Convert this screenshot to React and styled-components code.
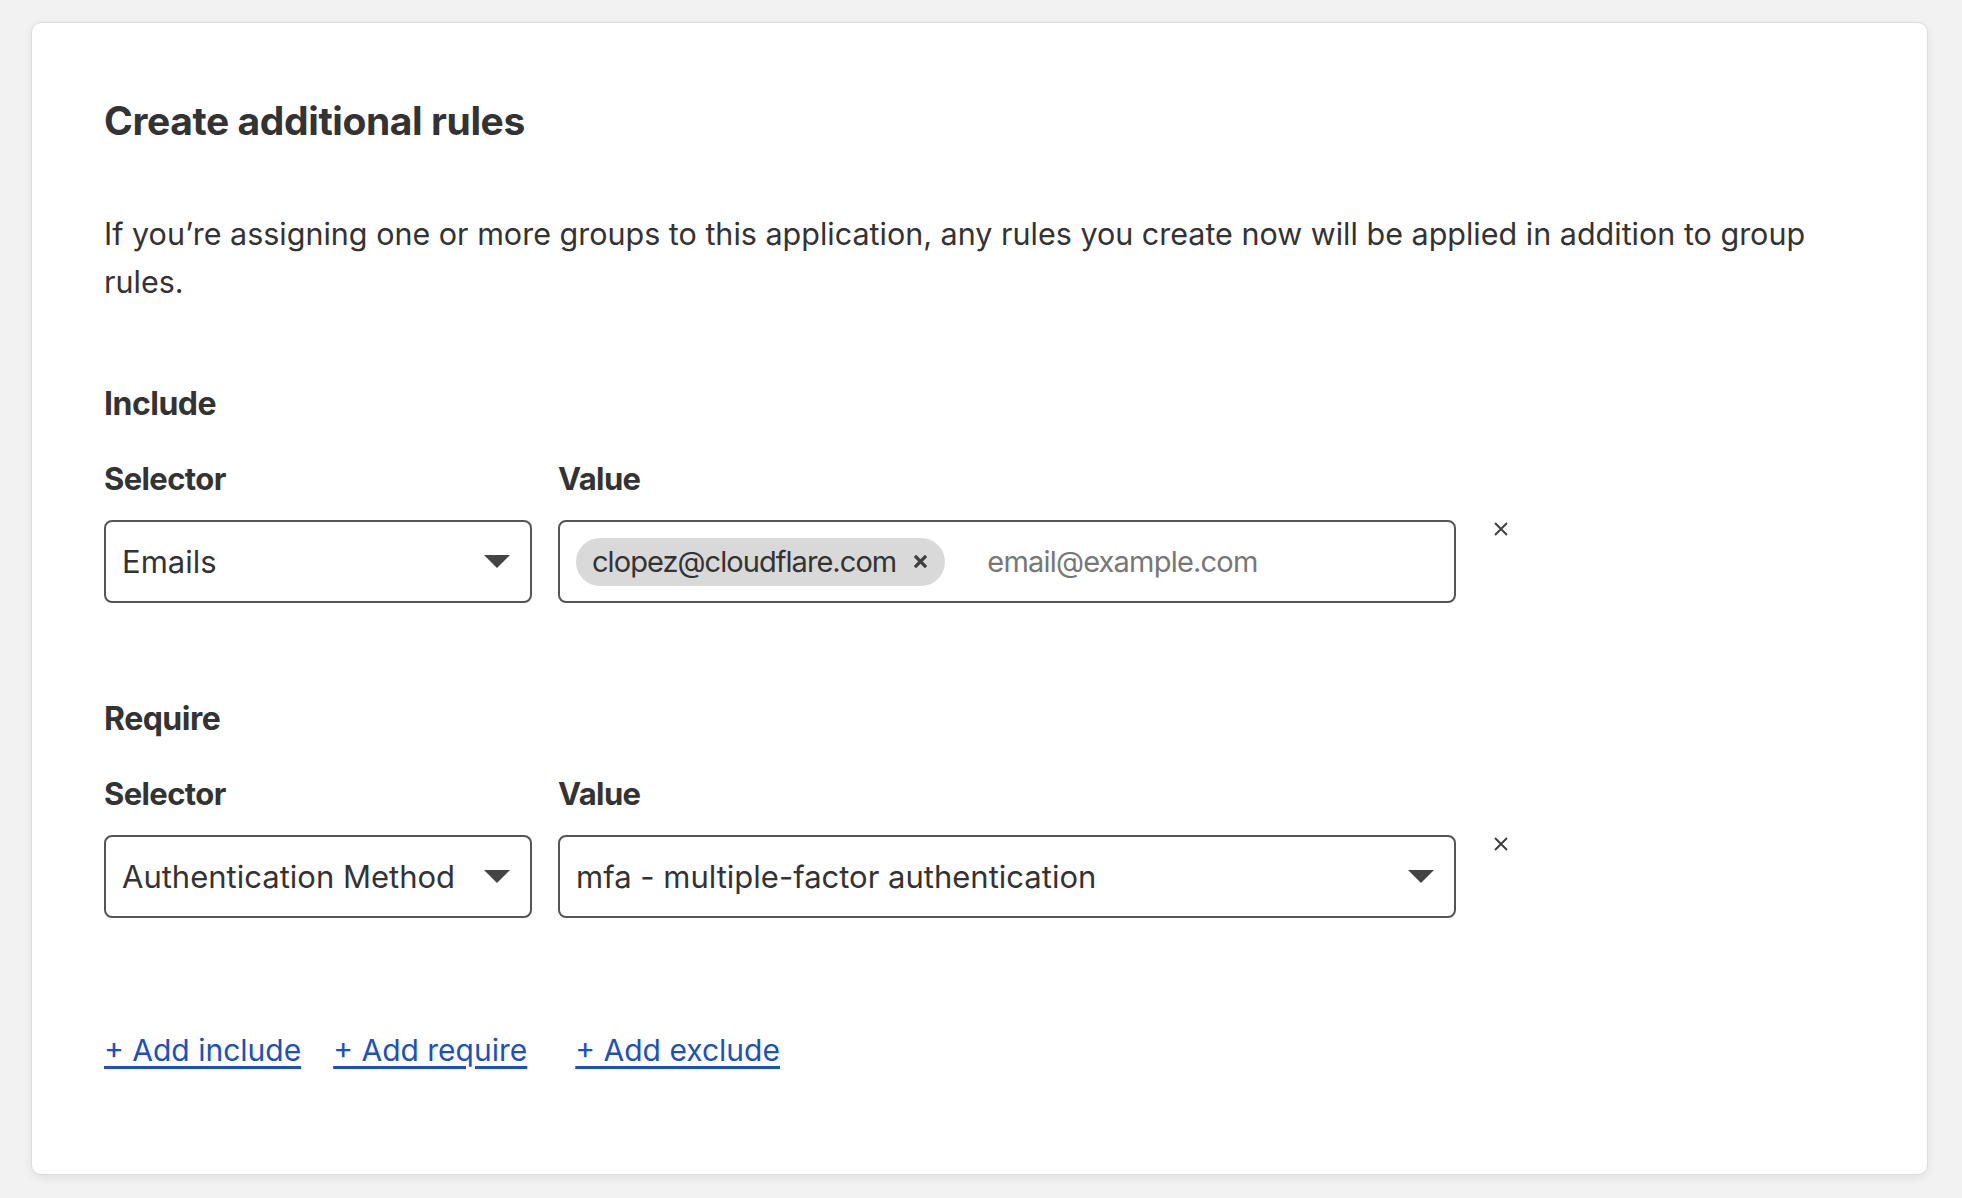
import React from "react";
import styled, { createGlobalStyle } from "styled-components";

const GlobalStyle = createGlobalStyle`
  html, body {
    margin: 0;
    padding: 0;
    background: #f2f2f2;
  }
  body {
    font-family: Inter, "Noto Sans", "Liberation Sans", sans-serif;
    color: #313131;
    -webkit-font-smoothing: antialiased;
  }
  * { box-sizing: border-box; }
`;

const Page = styled.div`
  padding: 22px 34px 27px 31px;
`;

const Card = styled.section`
  width: 1897px;
  background: #ffffff;
  border: 1px solid #dcdcdc;
  border-radius: 10px;
  box-shadow: 0 3px 10px rgba(0, 0, 0, 0.07);
  padding: 76px 72px 104px 72px;
  display: flex;
  flex-direction: column;
`;

const Title = styled.h2`
  margin: 0;
  font-size: 39px;
  line-height: 43px;
  font-weight: 700;
  color: #333333;
  letter-spacing: -0.4px;
`;

const Description = styled.p`
  margin: 68px 0 0 0;
  font-size: 30.5px;
  line-height: 48px;
  font-weight: 400;
  color: #333333;
  max-width: 1730px;
`;

const Section = styled.div`
  margin-top: ${(p) => p.$top}px;
  display: flex;
  flex-direction: column;
`;

const SectionTitle = styled.h3`
  margin: 0;
  font-size: 32px;
  line-height: 40px;
  font-weight: 700;
  color: #333333;
  letter-spacing: -0.5px;
`;

const FieldRow = styled.div`
  margin-top: 35px;
  display: flex;
  align-items: flex-start;
`;

const Field = styled.div`
  display: flex;
  flex-direction: column;
  width: ${(p) => p.$width}px;
  margin-right: ${(p) => p.$gap}px;
`;

const FieldLabel = styled.label`
  font-size: 31px;
  line-height: 40px;
  font-weight: 700;
  color: #333333;
  letter-spacing: -0.6px;
  margin-bottom: 21px;
`;

const Box = styled.div`
  height: 83px;
  border: 2px solid #555555;
  border-radius: 8px;
  background: #ffffff;
  display: flex;
  align-items: center;
  padding: 0 ${(p) => p.$padRight || 16}px 0 ${(p) => p.$padLeft || 16}px;
  gap: 16px;
`;

const BoxText = styled.span`
  flex: 1;
  font-size: 31px;
  color: #333333;
  white-space: nowrap;
  overflow: hidden;
`;

const Caret = styled.span`
  width: 0;
  height: 0;
  border-left: 13px solid transparent;
  border-right: 13px solid transparent;
  border-top: 13px solid #444444;
  flex-shrink: 0;
`;

const Chip = styled.span`
  display: inline-flex;
  align-items: center;
  height: 48px;
  padding: 0 18px 0 16px;
  border-radius: 24px;
  background: #d9d9d9;
  font-size: 29px;
  letter-spacing: -0.95px;
  color: #333333;
  gap: 18px;
  flex-shrink: 0;
`;

const Placeholder = styled.span`
  margin-left: 26px;
  font-size: 29px;
  letter-spacing: -0.8px;
  color: #777777;
`;

const RemoveButton = styled.button`
  margin-top: 61px;
  width: 18px;
  height: 18px;
  padding: 0;
  border: none;
  background: transparent;
  display: flex;
  align-items: center;
  justify-content: center;
  cursor: pointer;
`;

const Links = styled.div`
  margin-top: 112px;
  display: flex;
  align-items: center;
`;

const AddLink = styled.a`
  font-size: 30px;
  line-height: 40px;
  color: #1d50bf;
  text-decoration: underline;
  text-decoration-thickness: 3px;
  text-underline-offset: 5px;
  margin-right: ${(p) => p.$after || 0}px;
  cursor: pointer;
`;

const XIcon = ({ size, stroke }) => (
  <svg width={size} height={size} viewBox="0 0 14 14" fill="none">
    <path d="M1 1L13 13M13 1L1 13" stroke="#404040" strokeWidth={stroke} strokeLinecap="butt" />
  </svg>
);

const Rule = ({ heading, top, selector, children }) => (
  <Section $top={top}>
    <SectionTitle>{heading}</SectionTitle>
    <FieldRow>
      <Field $width={428} $gap={26}>
        <FieldLabel>Selector</FieldLabel>
        <Box $padRight={20}>
          <BoxText>{selector}</BoxText>
          <Caret />
        </Box>
      </Field>
      <Field $width={898} $gap={36}>
        <FieldLabel>Value</FieldLabel>
        {children}
      </Field>
      <RemoveButton aria-label="Remove">
        <XIcon size={14} stroke={2} />
      </RemoveButton>
    </FieldRow>
  </Section>
);

export default function App() {
  return (
    <>
      <GlobalStyle />
      <Page>
        <Card>
          <Title>Create additional rules</Title>
          <Description>
            If you’re assigning one or more groups to this application, any rules you create now will be applied in addition to group rules.
          </Description>

          <Rule heading="Include" top={78} selector="Emails">
            <Box>
              <Chip>
                clopez@cloudflare.com
                <XIcon size={13} stroke={3.6} />
              </Chip>
              <Placeholder>email@example.com</Placeholder>
            </Box>
          </Rule>

          <Rule heading="Require" top={96} selector="Authentication Method">
            <Box $padRight={20}>
              <BoxText>mfa - multiple-factor authentication</BoxText>
              <Caret />
            </Box>
          </Rule>

          <Links>
            <AddLink $after={32}>+ Add include</AddLink>
            <AddLink $after={48}>+ Add require</AddLink>
            <AddLink>+ Add exclude</AddLink>
          </Links>
        </Card>
      </Page>
    </>
  );
}
